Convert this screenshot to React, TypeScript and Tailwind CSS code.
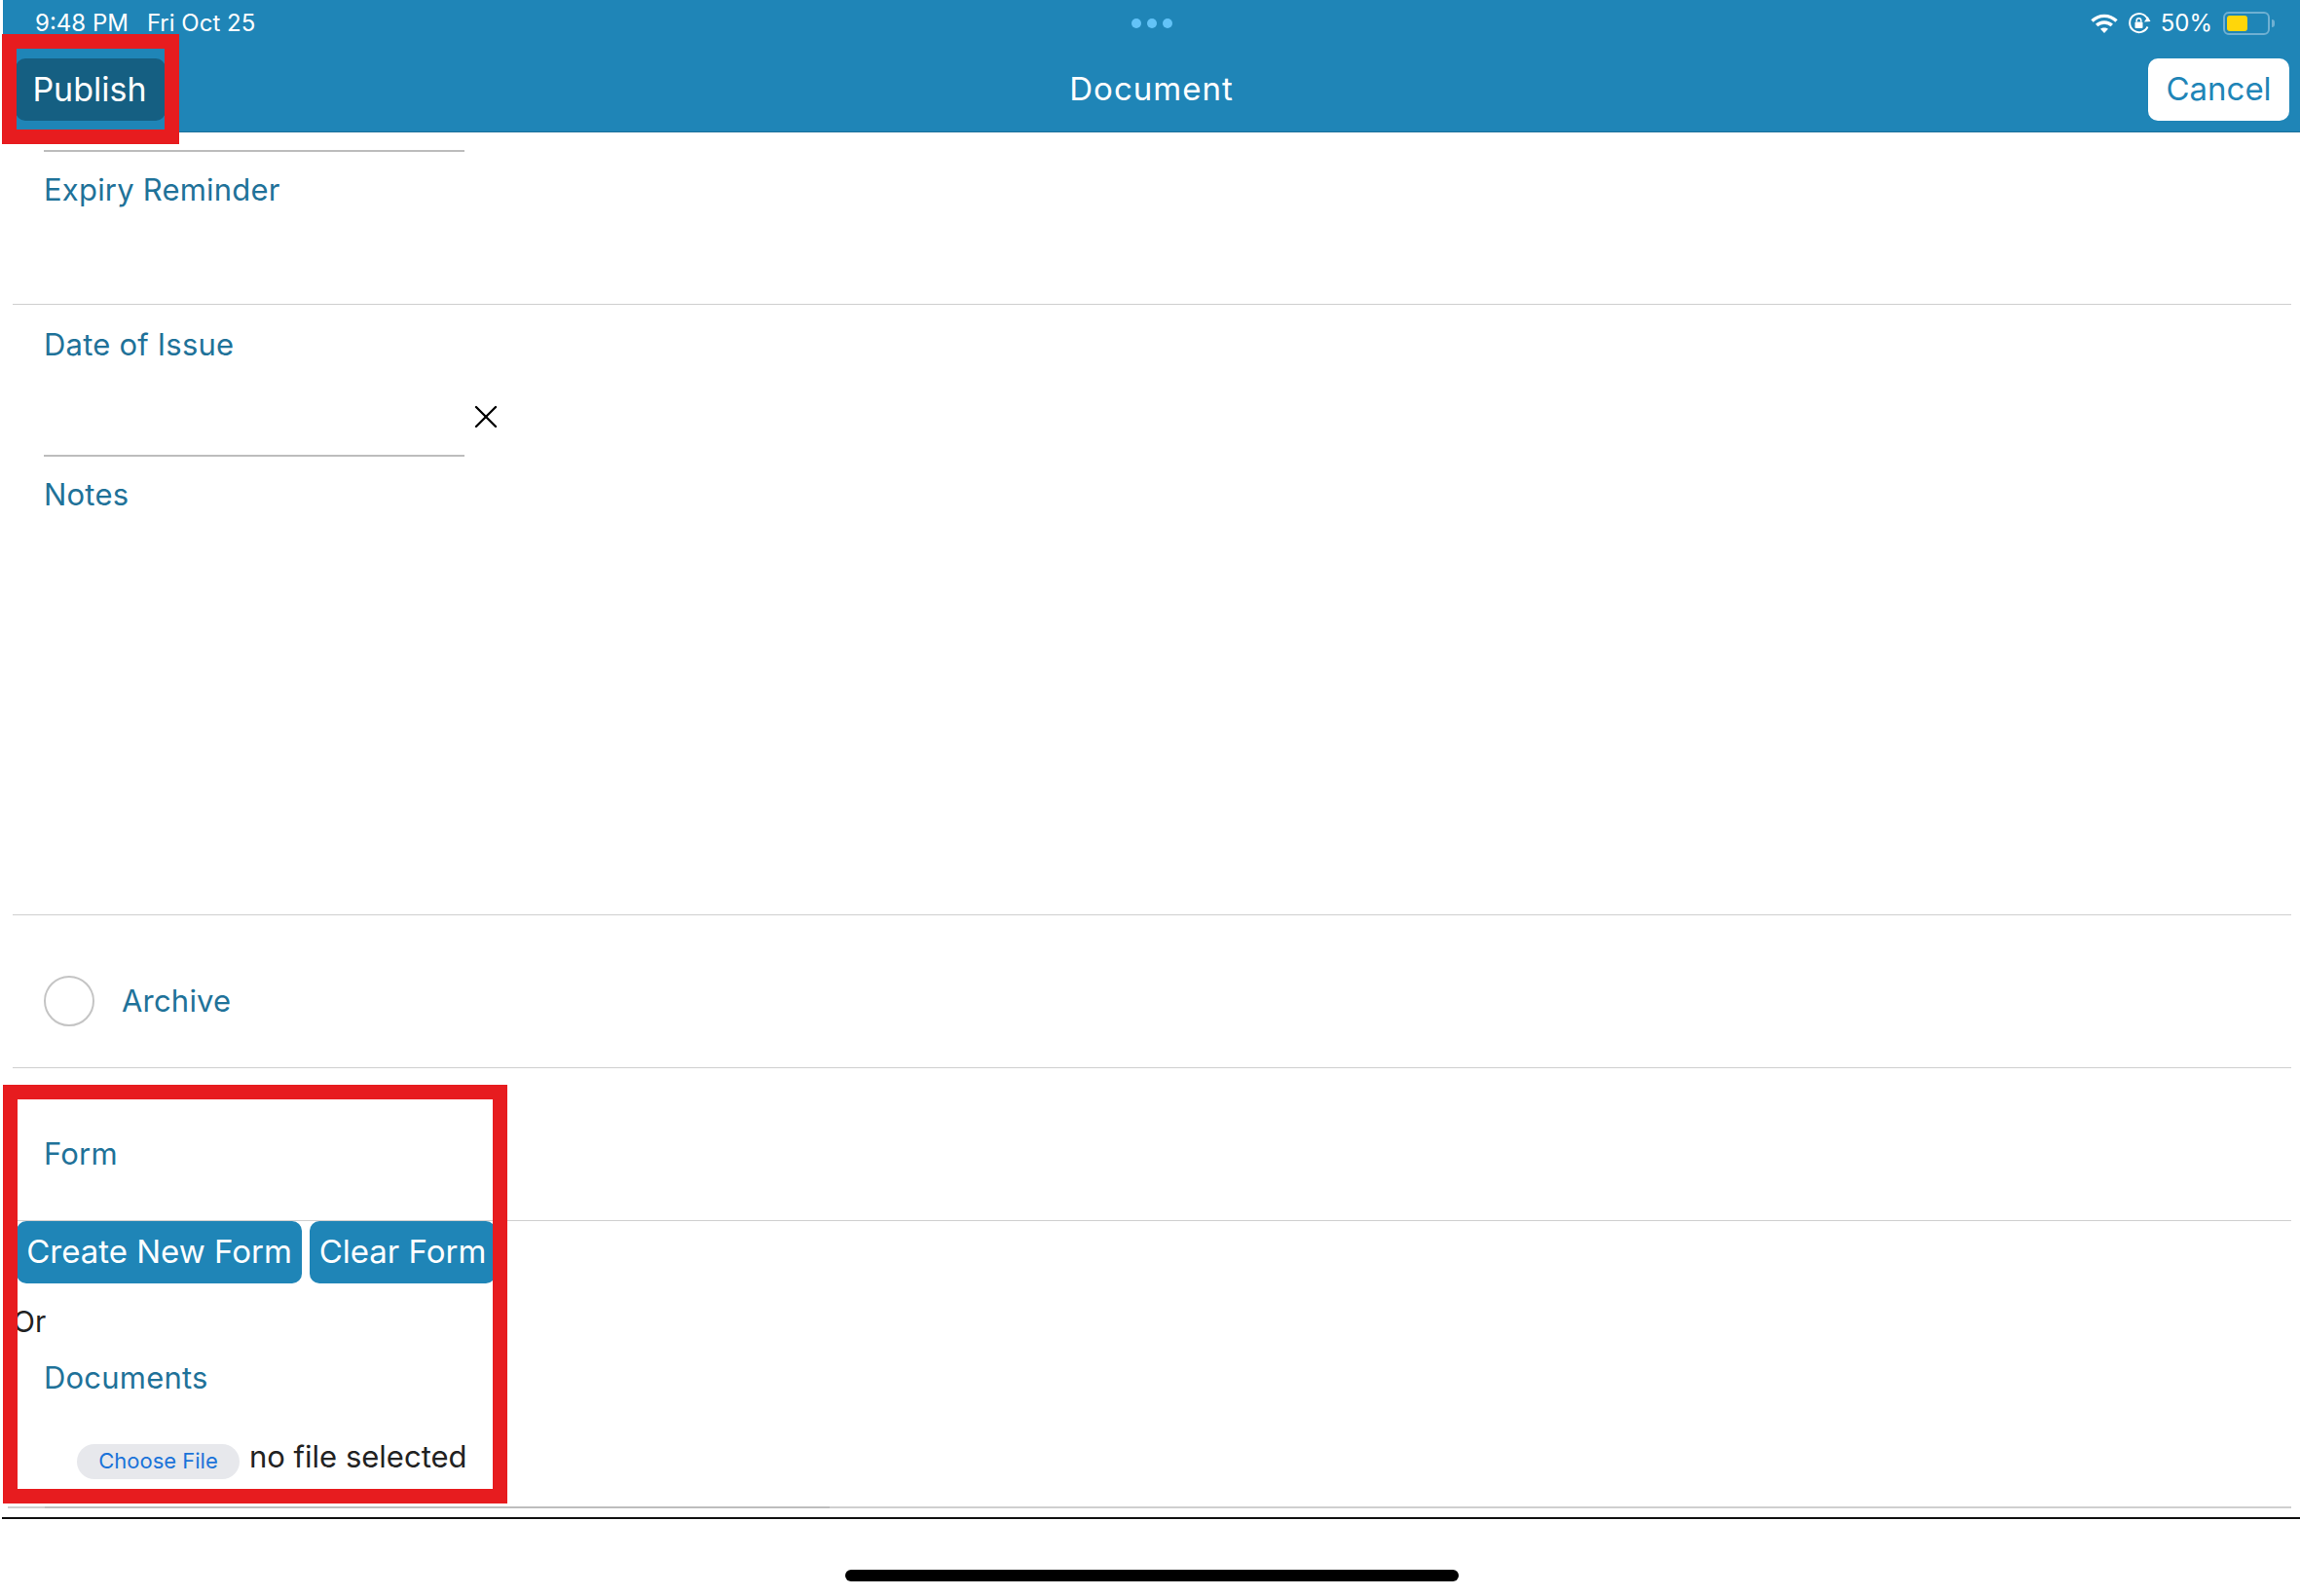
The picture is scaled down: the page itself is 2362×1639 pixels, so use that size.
import React from 'react';
import { X } from 'lucide-react';

const Label = ({ children, className = '' }: { children: React.ReactNode; className?: string }) => (
  <div className={`text-[31px] leading-[36px] tracking-[0.2px] text-[#1f7299] ${className}`}>{children}</div>
);

const StatusBar = () => (
  <div className="relative flex h-[46px] items-center justify-between pl-[33px] pr-[26px] pt-[2px] text-[24px] leading-[30px] text-white">
    <div className="flex gap-[19px]">
      <span>9:48 PM</span>
      <span>Fri Oct 25</span>
    </div>
    <div className="absolute left-[1159px] top-[19px] flex gap-[6px]">
      <span className="h-[10px] w-[10px] rounded-full bg-[#63c3f7]" />
      <span className="h-[10px] w-[10px] rounded-full bg-[#63c3f7]" />
      <span className="h-[10px] w-[10px] rounded-full bg-[#63c3f7]" />
    </div>
    <div className="flex items-center">
      <svg width="28" height="22" viewBox="0 0 28 22" fill="none" stroke="white" strokeWidth="3.4" strokeLinecap="butt">
        <path d="M1.5 8.5C8.5 1.6 19.5 1.6 26.5 8.5" />
        <path d="M6.2 13C10.5 8.9 17.5 8.9 21.8 13" />
        <path d="M14 21l-4-4.2c2.2-1.9 5.8-1.9 8 0z" fill="white" stroke="none" />
      </svg>
      <svg className="ml-[10px]" width="24" height="24" viewBox="0 0 24 24" fill="none">
        <path d="M20.5 15.5A9.6 9.6 0 1 1 20.2 7" stroke="white" strokeWidth="2" />
        <path d="M23.5 10l-6.5.4 3.7-5.4z" fill="white" />
        <rect x="7.5" y="10.5" width="8" height="6.5" rx="1" fill="white" />
        <path d="M9.2 10.5V9a2.3 2.3 0 0 1 4.6 0v1.5" stroke="white" strokeWidth="1.5" />
      </svg>
      <span className="ml-[10px]">50%</span>
      <div className="ml-[11px] flex items-center">
        <div className="h-[24px] w-[48px] rounded-[6px] border-2 border-[#6fb0d2] p-[2px]">
          <div className="h-full w-[21px] rounded-[3px] bg-[#ffd60a]" />
        </div>
        <div className="ml-[2px] h-[8px] w-[3px] rounded-r-full bg-[#6fb0d2]" />
      </div>
    </div>
  </div>
);

const Header = () => (
  <header className="ml-[3px] h-[136px] border-b border-[#1a6f99] bg-[#1f85b7]">
    <StatusBar />
    <div className="relative mt-[14px] flex h-[64px] items-center justify-between pl-[13px] pr-[11px] text-[33px]">
      <button className="h-[64px] w-[154px] rounded-[10px] bg-[#155f82] pb-[2px] pr-[2px] text-[34px] text-white">Publish</button>
      <div className="absolute inset-0 flex items-center justify-center tracking-[1px] text-white">Document</div>
      <button className="relative h-[64px] w-[145px] rounded-[10px] bg-white text-[#1f85b7]">Cancel</button>
    </div>
  </header>
);

const Line = ({ className = '' }: { className?: string }) => <div className={`h-[2px] bg-[#bdbdbd] ${className}`} />;

export default function App() {
  return (
    <div className="relative h-[1639px] w-[2362px] overflow-hidden bg-white font-['Inter','Liberation_Sans',sans-serif]">
      <Header />

      <div className="ml-[13px] mr-[9px] h-[177px] border-b border-[#cfcfcf] pl-[32px] pt-[18px]">
        <Line className="w-[432px]" />
        <Label className="mt-[21px]">Expiry Reminder</Label>
      </div>

      <div className="relative ml-[13px] mr-[9px] h-[156px] pl-[32px] pt-[23px]">
        <Label>Date of Issue</Label>
        <div className="h-[85px]" />
        <Line className="mt-[10px] w-[432px]" />
        <X className="absolute left-[466px] top-[95px] h-[40px] w-[40px] text-black" strokeWidth={1.4} />
      </div>

      <div className="ml-[13px] mr-[9px] h-[471px] border-b border-[#cfcfcf] pl-[32px] pt-[21px]">
        <Label>Notes</Label>
      </div>

      <div className="ml-[13px] mr-[9px] h-[157px] border-b border-[#cfcfcf] pl-[32px] pt-[62px]">
        <div className="flex items-center">
          <div className="h-[52px] w-[52px] rounded-full border-2 border-[#c4c4c4]" />
          <Label className="ml-[28px]">Archive</Label>
        </div>
      </div>

      <div className="ml-[13px] mr-[9px] h-[157px] border-b border-[#cfcfcf] pl-[32px] pt-[70px]">
        <Label>Form</Label>
      </div>

      <div className="flex gap-[8px] pl-[17px] text-[33px] text-white">
        <button className="h-[64px] w-[293px] rounded-[10px] bg-[#1f85b7]">Create New Form</button>
        <button className="h-[64px] w-[191px] rounded-[10px] bg-[#1f85b7]">Clear Form</button>
      </div>

      <div className="mt-[21px] pl-[13px] text-[30px] leading-[36px] text-[#222]">Or</div>
      <Label className="ml-[45px] mt-[22px]">Documents</Label>

      <div className="ml-[79px] mt-[43px] flex h-[40px] items-center">
        <button className="mt-[10px] h-[36px] w-[167px] rounded-full bg-[#e7e8ec] pb-[2px] text-[22px] text-[#1a73d9]">Choose File</button>
        <span className="ml-[10px] text-[31px] leading-[36px] text-[#222]">no file selected</span>
      </div>

      <div className="ml-[8px] mr-[9px] mt-[31px] h-[2px] bg-[#cfcfcf] pl-[38px]">
        <Line className="w-[806px]" />
      </div>
      <div className="ml-[2px] mt-[9px] h-[2px] bg-[#111]" />
      <div className="mx-auto mt-[52px] h-[12px] w-[630px] translate-x-[2px] rounded-full bg-black" />

      {/* annotation boxes over the screenshot */}
      <div className="absolute left-[2px] top-[35px] h-[113px] w-[182px] border-[15px] border-[#e71c1f]" />
      <div className="absolute left-[3px] top-[1114px] h-[430px] w-[518px] border-[15px] border-[#e71c1f]" />
    </div>
  );
}
